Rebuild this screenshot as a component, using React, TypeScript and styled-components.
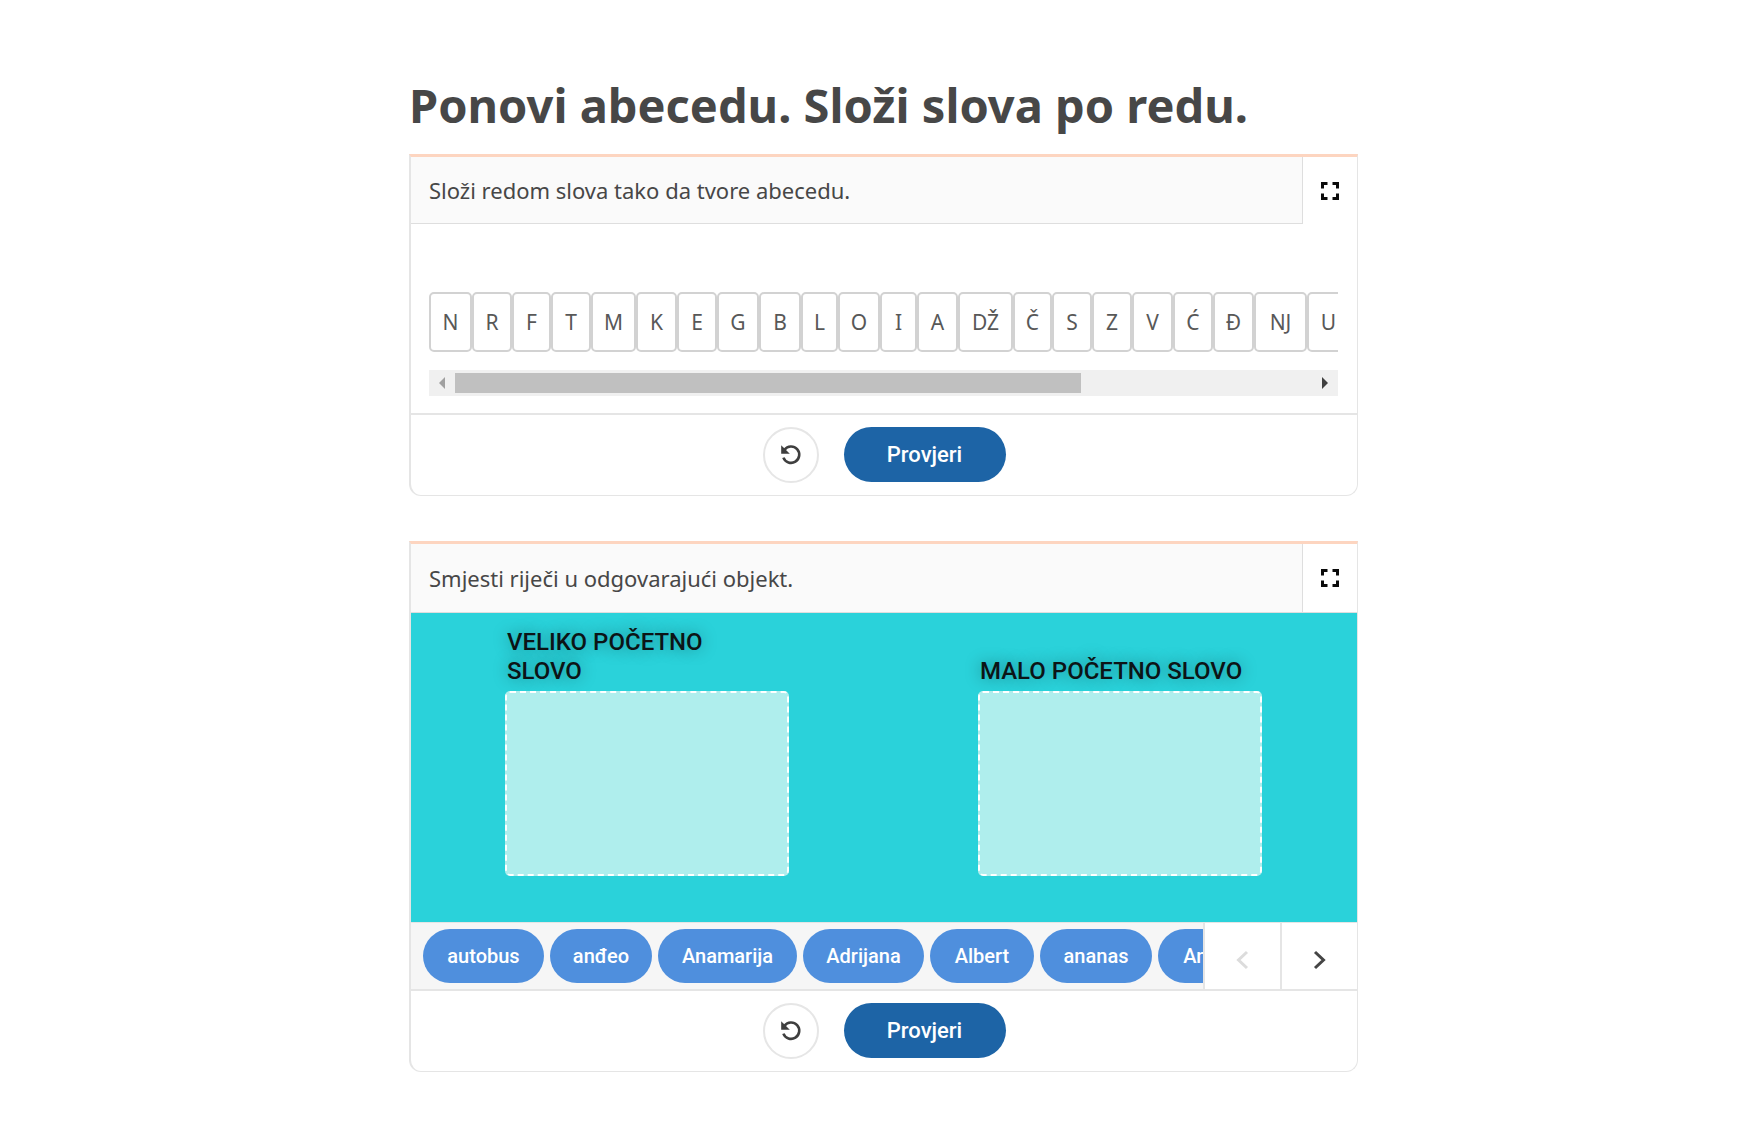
import React from "react";
import styled, { createGlobalStyle } from "styled-components";

const Global = createGlobalStyle`
  *, *::before, *::after { box-sizing: border-box; }
  body { margin: 0; background: #fff; color: #474747; font-family: "Noto Sans", sans-serif; }
  button { font: inherit; color: inherit; cursor: pointer; }
`;

const line = "#e5e5e5";
const condensed = `Roboto, "Noto Sans", sans-serif`;

const Page = styled.main`
  display: flex;
  flex-direction: column;
  gap: 45px;
  max-width: 1017px;
  margin: 0 auto;
  padding: 75px 24px 76px 44px;
`;

const Title = styled.h1`
  margin: 0 0 19px;
  font-size: 47px;
  line-height: 60px;
  font-weight: 700;
`;

const Card = styled.section`
  display: flex;
  flex-direction: column;
  border: 1px solid ${line};
  border-left-width: 2px;
  border-top: 3px solid #fdd5c0;
  border-radius: 0 0 12px 12px;
  overflow: hidden;
  background: #fff;
`;

const Header = styled.header<{ $ruled?: boolean }>`
  display: flex;
  height: ${(p) => (p.$ruled ? 69 : 67)}px;
`;

const Task = styled.h2`
  flex: 1;
  display: flex;
  align-items: center;
  margin: 0;
  padding: 0 18px;
  background: #fafafa;
  border-bottom: 1px solid #dedede;
  font-size: 22px;
  line-height: 30px;
  font-weight: 400;
`;

const Expand = styled.button<{ $ruled?: boolean }>`
  width: 55px;
  padding: 0;
  display: grid;
  place-items: center;
  background: #fff;
  border: 0;
  border-left: 1px solid #dedede;
  border-bottom: ${(p) => (p.$ruled ? "1px solid #dedede" : "0")};
`;

const Sorter = styled.div`
  padding: 68px 19px 17px 18px;
`;

const Tiles = styled.ul`
  display: flex;
  margin: 0 0 18px;
  padding: 0;
  list-style: none;
  overflow: hidden;
`;

const Tile = styled.li<{ $width: number }>`
  flex: none;
  width: ${(p) => p.$width}px;
  height: 60px;
  border: 2px solid #d2d2d2;
  border-radius: 5px;
  color: #585858;
  text-align: center;
  font-size: 21px;
  line-height: 57px;
`;

const Scrollbar = styled.div`
  display: flex;
  align-items: center;
  height: 26px;
  background: #f0f0f0;
`;

const ScrollArrow = styled.button`
  width: 26px;
  height: 26px;
  padding: 0;
  border: 0;
  background: none;
  display: grid;
  place-items: center;
`;

const Track = styled.div`
  flex: 1;
  height: 20px;
`;

const Thumb = styled.div`
  width: 73%;
  height: 100%;
  background: #c0c0c0;
`;

const Footer = styled.footer`
  display: flex;
  justify-content: center;
  gap: 25px;
  padding: 12px 0;
  border-top: 2px solid ${line};
`;

const Reset = styled.button`
  width: 56px;
  height: 56px;
  padding: 0;
  display: grid;
  place-items: center;
  background: #fff;
  border: 2px solid #e6e6e6;
  border-radius: 50%;
`;

const Check = styled.button`
  width: 162px;
  height: 55px;
  padding: 0;
  border: 0;
  border-radius: 28px;
  background: #1d64a6;
  color: #fff;
  font-family: ${condensed};
  font-size: 22px;
  font-weight: 500;
`;

const Board = styled.div`
  display: grid;
  grid-template-columns: 1fr 1fr;
  height: 309px;
  padding-bottom: 46px;
  background: #2ad2da;
`;

const Group = styled.div`
  display: flex;
  flex-direction: column;
  justify-content: flex-end;
  width: 284px;
  margin-left: 94px;
`;

const Caption = styled.h3`
  margin: 0 0 5px;
  padding: 0 16px 0 2px;
  color: #0c1416;
  font-family: ${condensed};
  font-size: 24px;
  line-height: 29px;
  font-weight: 500;
  text-shadow: 0 0 16px rgba(0, 0, 0, 0.4);
`;

const DropZone = styled.div`
  height: 185px;
  background: #afeeed;
  border: 2px dashed #fff;
  border-radius: 5px;
`;

const Tray = styled.div`
  display: flex;
  height: 67px;
  border-top: 1px solid ${line};
`;

const Chips = styled.div`
  flex: 1;
  min-width: 0;
  display: flex;
  align-items: flex-start;
  gap: 6px;
  padding: 6px 0 0 12px;
  background: #f6f6f6;
  overflow: hidden;
`;

const Chip = styled.button<{ $width: number }>`
  flex: none;
  width: ${(p) => p.$width}px;
  height: 54px;
  padding: 0;
  border: 0;
  border-radius: 27px;
  background: #4f8fdd;
  color: #fff;
  font-family: ${condensed};
  font-size: 20px;
  font-weight: 500;
`;

const Step = styled.button`
  width: 77px;
  padding: 8px 0 0;
  display: grid;
  place-items: center;
  background: #fff;
  border: 0;
  border-left: 2px solid ${line};
`;

const letters: [string, number][] = [
  ["N", 43], ["R", 40], ["F", 39], ["T", 40], ["M", 45], ["K", 41], ["E", 40],
  ["G", 42], ["B", 42], ["L", 37], ["O", 42], ["I", 37], ["A", 41], ["DŽ", 55],
  ["Č", 39], ["S", 40], ["Z", 40], ["V", 41], ["Ć", 40], ["Đ", 41], ["NJ", 53],
  ["U", 43],
];

const words: [string, number][] = [
  ["autobus", 121], ["anđeo", 102], ["Anamarija", 139], ["Adrijana", 121],
  ["Albert", 104], ["ananas", 112], ["Andrija", 114],
];

const ExpandIcon = () => (
  <svg width="18" height="18" viewBox="0 0 18 18" fill="none" stroke="#0a0a0a" strokeWidth="3">
    <path d="M1.5 6.5V1.5H6.5M11.5 1.5h5V6.5M16.5 11.5v5H11.5M6.5 16.5H1.5V11.5" />
  </svg>
);

const ResetIcon = () => (
  <svg width="22" height="22" viewBox="0 0 22 22" fill="none">
    <path d="M4.5 5.7A8.2 8.2 0 1 1 3.4 13.6" stroke="#3f3f3f" strokeWidth="2.6" />
    <path d="M1.2 1.2V9.8H9.8Z" fill="#3f3f3f" />
  </svg>
);

const Chevron = ({ next }: { next?: boolean }) => (
  <svg width="14" height="20" viewBox="0 0 14 20" fill="none" stroke={next ? "#454545" : "#dcdcdc"} strokeWidth="3">
    <path d={next ? "M2 2l8.5 8L2 18" : "M11 2l-8.5 8L11 18"} />
  </svg>
);

const Actions = () => (
  <Footer>
    <Reset type="button" aria-label="Ponovi"><ResetIcon /></Reset>
    <Check type="button">Provjeri</Check>
  </Footer>
);

const TaskHeader = ({ text, ruled }: { text: string; ruled?: boolean }) => (
  <Header $ruled={ruled}>
    <Task>{text}</Task>
    <Expand type="button" $ruled={ruled} aria-label="Cijeli zaslon"><ExpandIcon /></Expand>
  </Header>
);

export default function App() {
  return (
    <>
      <Global />
      <Page>
        <div>
          <Title>Ponovi abecedu. Složi slova po redu.</Title>
          <Card>
            <TaskHeader text="Složi redom slova tako da tvore abecedu." />
            <Sorter>
              <Tiles>
                {letters.map(([letter, width]) => (
                  <Tile key={letter} $width={width}>{letter}</Tile>
                ))}
              </Tiles>
              <Scrollbar>
                <ScrollArrow type="button" aria-label="Lijevo">
                  <svg width="6" height="12" viewBox="0 0 6 12"><path d="M6 0v12L0 6z" fill="#a0a0a0" /></svg>
                </ScrollArrow>
                <Track><Thumb /></Track>
                <ScrollArrow type="button" aria-label="Desno">
                  <svg width="6" height="12" viewBox="0 0 6 12"><path d="M0 0v12l6-6z" fill="#404040" /></svg>
                </ScrollArrow>
              </Scrollbar>
            </Sorter>
            <Actions />
          </Card>
        </div>
        <Card>
          <TaskHeader text="Smjesti riječi u odgovarajući objekt." ruled />
          <Board>
            <Group>
              <Caption>VELIKO POČETNO SLOVO</Caption>
              <DropZone />
            </Group>
            <Group>
              <Caption>MALO POČETNO SLOVO</Caption>
              <DropZone />
            </Group>
          </Board>
          <Tray>
            <Chips>
              {words.map(([word, width]) => (
                <Chip key={word} type="button" $width={width}>{word}</Chip>
              ))}
            </Chips>
            <Step type="button" aria-label="Prethodno"><Chevron /></Step>
            <Step type="button" aria-label="Sljedeće"><Chevron next /></Step>
          </Tray>
          <Actions />
        </Card>
      </Page>
    </>
  );
}
